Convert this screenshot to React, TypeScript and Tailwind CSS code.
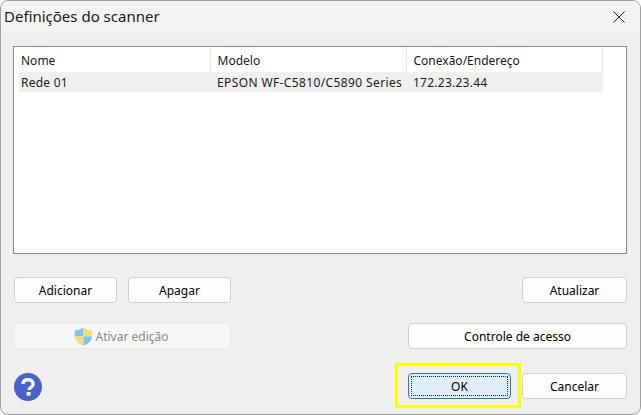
import { ReactNode } from "react";

const rows = [{ name: "Rede 01", model: "EPSON WF-C5810/C5890 Series", address: "172.23.23.44" }];

function DialogButton({ children, className = "" }: { children: ReactNode; className?: string }) {
  return (
    <button className={`h-[26px] rounded-[4px] border border-[#d0d0d0] bg-[#fdfdfd] pt-px text-center text-[12px] leading-[24px] text-black ${className}`}>
      {children}
    </button>
  );
}

function ShieldIcon() {
  return (
    <svg width="19" height="19" viewBox="0 0 19 19" className="mr-[3px] shrink-0">
      <path d="M9.5 0.5 C7 2.6 4 3.4 0.8 3.4 L0.8 9.5 L9.5 9.5 Z" fill="#7cc4ea" />
      <path d="M9.5 0.5 C12 2.6 15 3.4 18.2 3.4 L18.2 9.5 L9.5 9.5 Z" fill="#fbdc74" />
      <path d="M0.8 9.5 L9.5 9.5 L9.5 18.8 C5 17 1.4 14.2 0.8 9.5 Z" fill="#fbdc74" />
      <path d="M18.2 9.5 L9.5 9.5 L9.5 18.8 C14 17 17.6 14.2 18.2 9.5 Z" fill="#7cc4ea" />
    </svg>
  );
}

function HelpIcon() {
  return (
    <svg width="28" height="28" viewBox="0 0 28 28">
      <circle cx="14" cy="14" r="14" fill="#4863c8" />
      <path d="M9 11 C9 8 11.2 6.8 14 6.8 C17 6.8 19.2 8.4 19.2 11 C19.2 14.2 15 14.4 15 17" fill="none" stroke="#f4f4f8" strokeWidth="3.4" />
      <rect x="12.6" y="19" width="4" height="3.6" fill="#f4f4f8" />
    </svg>
  );
}

export default function App() {
  return (
    <div className="h-[415px] w-[641px] overflow-hidden bg-white font-['Noto_Sans',sans-serif]">
      <div className="relative flex h-[415px] w-[641px] flex-col overflow-hidden rounded-[8px] border border-[#a0a0a0] bg-[#efefef]">
        {/* Title bar */}
        <div className="flex h-[31px] shrink-0 items-center justify-between bg-[#f3f3f3] pl-[3px] pr-[15px]">
          <span className="text-[15px] text-[#1a1a1a]">Definições do scanner</span>
          <svg width="12" height="12" viewBox="0 0 12 12">
            <path d="M0.5 0.5 L11.5 11.5 M11.5 0.5 L0.5 11.5" stroke="#222" strokeWidth="1" fill="none" />
          </svg>
        </div>

        <div className="flex flex-1 flex-col pl-[12px] pr-[13px] pt-[14px]">
          {/* Scanner list */}
          <div className="h-[208px] border border-[#8a8a8a] bg-white pl-[5px] pt-[1px] text-[12px] text-[#1a1a1a]">
            <table className="w-[584px] table-fixed border-collapse">
              <thead>
                <tr className="h-[24px] text-left">
                  <th className="w-[191px] border-r border-[#e5e5e5] pl-[2px] pt-px font-normal">Nome</th>
                  <th className="w-[196px] border-r border-[#e5e5e5] pl-[7px] pt-px font-normal">Modelo</th>
                  <th className="border-r border-[#e5e5e5] pl-[7px] pt-px font-normal">Conexão/Endereço</th>
                </tr>
              </thead>
              <tbody>
                {rows.map((row) => (
                  <tr key={row.name} className="h-[20px] bg-[#f0f0f0]">
                    <td className="pl-[2px] pt-px tracking-[0.25px]">{row.name}</td>
                    <td className="whitespace-nowrap pl-[7px] pt-px tracking-[0.38px]">{row.model}</td>
                    <td className="pl-[7px] pt-px tracking-[0.25px]">{row.address}</td>
                  </tr>
                ))}
              </tbody>
            </table>
          </div>

          {/* Actions */}
          <div className="mt-[23px] flex justify-between pl-[1px]">
            <div className="flex gap-[11px]">
              <DialogButton className="w-[103px]">Adicionar</DialogButton>
              <DialogButton className="w-[103px]">Apagar</DialogButton>
            </div>
            <DialogButton className="w-[105px]">Atualizar</DialogButton>
          </div>

          <div className="mt-[20px] flex justify-between pl-[1px]">
            <div className="flex h-[26px] w-[217px] items-center justify-center rounded-[4px] border border-[#ebebeb] bg-[#f7f7f7] pr-[3px] text-[12px] text-[#8a8a8a]">
              <ShieldIcon />
              <span className="pt-px">Ativar edição</span>
            </div>
            <DialogButton className="w-[219px]">Controle de acesso</DialogButton>
          </div>

          {/* Footer */}
          <div className="mt-[24px] flex items-start justify-between pl-[1px]">
            <HelpIcon />
            <div className="flex gap-[11px]">
              <div className="flex h-[26px] w-[103px] items-center justify-center rounded-[4px] border border-[#2a78c4] bg-[#e0eef9] p-[2px] text-[12px] text-black">
                <div className="flex h-full w-full items-center justify-center border border-dotted border-[#222] pt-px">OK</div>
              </div>
              <DialogButton className="w-[105px]">Cancelar</DialogButton>
            </div>
          </div>
        </div>

        {/* Highlight annotation around OK */}
        <div className="absolute left-[394px] top-[362px] h-[45px] w-[126px] border-[3px] border-[#ffff00]" />
      </div>
    </div>
  );
}
